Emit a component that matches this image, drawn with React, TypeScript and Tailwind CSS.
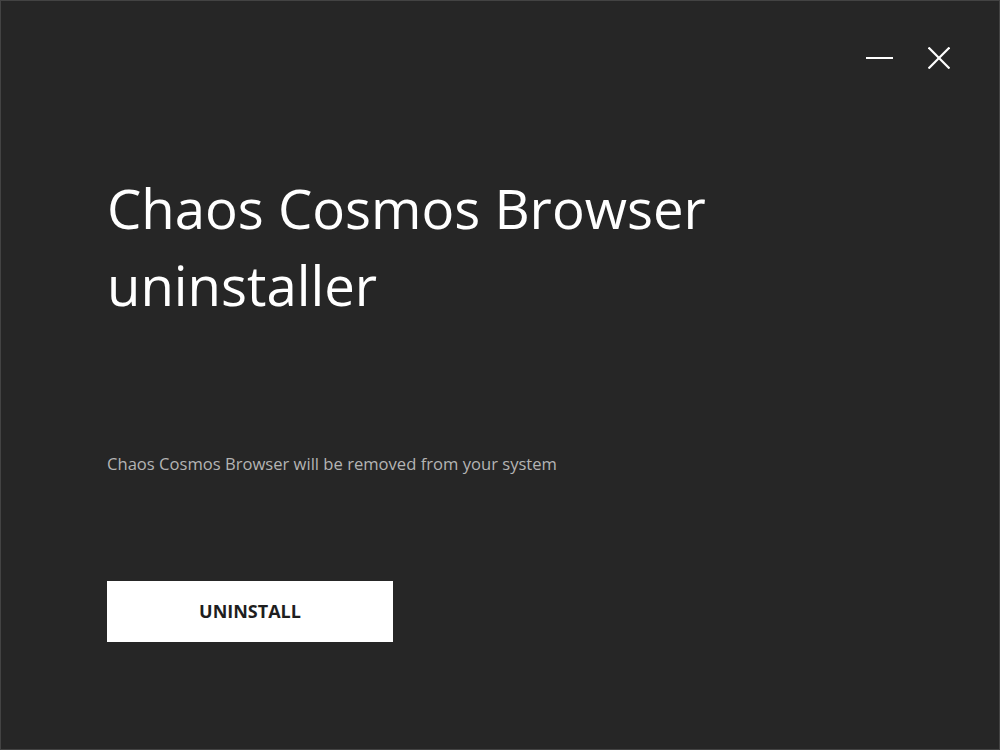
export default function App() {
  return (
    <div
      className="w-[1000px] h-[750px] bg-[#262626] border border-[#434343] flex flex-col text-white"
      style={{ fontFamily: '"Open Sans", "Noto Sans", sans-serif' }}
    >
      {/* window controls */}
      <div className="flex justify-end items-center gap-[35px] pt-[45px] pr-[49px] h-[69px]">
        <button className="w-[27px] h-[24px] flex items-center justify-center">
          <svg width="27" height="24" viewBox="0 0 27 24">
            <line x1="0" y1="12" x2="27" y2="12" stroke="white" strokeWidth="2" />
          </svg>
        </button>
        <button className="w-[22px] h-[24px] flex items-center justify-center">
          <svg width="22" height="22" viewBox="0 0 22 22">
            <line x1="0.5" y1="0.5" x2="21.5" y2="21.5" stroke="white" strokeWidth="2.2" />
            <line x1="21.5" y1="0.5" x2="0.5" y2="21.5" stroke="white" strokeWidth="2.2" />
          </svg>
        </button>
      </div>

      <div className="pl-[106px] pt-[100px]">
        <h1 className="text-[54.5px] leading-[77px] font-normal">
          Chaos Cosmos Browser
          <br />
          uninstaller
        </h1>
        <p className="mt-[128px] text-[16.6px] leading-[24px] text-[#b4b4b4]">
          Chaos Cosmos Browser will be removed from your system
        </p>
        <button className="mt-[105px] w-[286px] h-[61px] bg-white text-[#1e1e1e] text-[18px] font-bold">
          UNINSTALL
        </button>
      </div>
    </div>
  );
}
